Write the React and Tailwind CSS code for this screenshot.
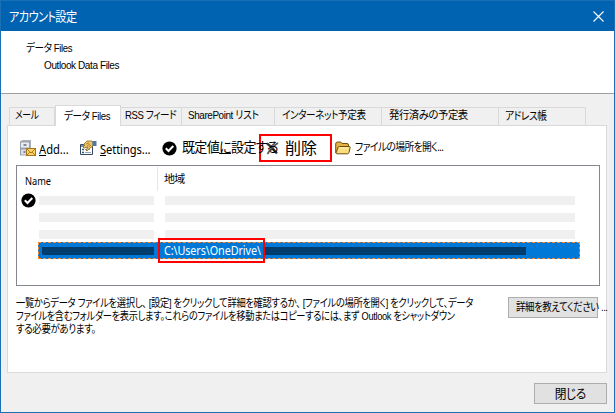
import React, { useState } from 'react';

const tabs = [
  { id: 'mail', label: 'メール', box: 'w-[46px] pl-[5px]', text: 'scale-x-[0.8]' },
  { id: 'data', label: 'データ Files', box: 'w-[66px] pl-2', text: 'scale-x-[0.87]' },
  { id: 'rss', label: 'RSS フィード', box: 'w-[61px] pl-1', text: 'scale-x-[0.87]' },
  { id: 'sharepoint', label: 'SharePoint リスト', box: 'w-[93px] pl-1.5', text: 'scale-x-[0.9]' },
  { id: 'calendar', label: 'インターネット予定表', box: 'w-[107px] pl-[7px]', text: 'scale-x-[0.87]' },
  { id: 'published', label: '発行済みの予定表', box: 'w-[117px] pl-[7px]', text: 'scale-x-[0.94]' },
  { id: 'address', label: 'アドレス帳', box: 'w-[87px] pl-1.5', text: 'scale-x-[0.88] pt-0.5' }
];

const AddIcon = () => (
  <svg className="shrink-0" width="16" height="17" viewBox="0 0 16 17">
    <path d="M0 2l2-2h9v14l-1 1H0z" fill="#a9b0ba" />
    <rect x="0.500" y="2" width="9" height="6" fill="#e9ecf0" stroke="#8d96a3" strokeWidth="0.8" />
    <rect x="0.500" y="9" width="9" height="6" fill="#d9dee5" stroke="#8d96a3" strokeWidth="0.8" />
    <path d="M3.500 5h3M3.500 12h2" stroke="#5c6c82" strokeWidth="1.5" />
    <rect x="6.500" y="8.500" width="9" height="7" fill="#fbd667" stroke="#a8771d" />
    <path d="M7 9l4 4 4-4M7 15l3-3M15 15l-3-3" fill="none" stroke="#b77b19" />
  </svg>
);

const SettingsIcon = () => (
  <svg className="shrink-0" width="17" height="16" viewBox="0 0 17 16">
    <path d="M0.500 4.500h12v10h-12z" fill="#fff" stroke="#33465f" />
    <path d="M1 6h6" stroke="#7593b5" strokeWidth="2" />
    <path d="M2 9.500h2M2 12.500h2" stroke="#31557e" strokeWidth="1.6" />
    <path d="M5 9.500h5M5 12.500h6" stroke="#8ea3bd" />
    <path d="M3 5l4-4h5l1 1v4l-3 2-3 3-1-1 2-3-4 1-1-1 2-2z" fill="#edc669" stroke="#8b6519" strokeWidth="0.8" />
    <path d="M6 4l3-1M7 6l3-2M9 7l2-2" stroke="#a47622" strokeWidth="0.8" />
    <path d="M12.500 1h4v5h-4z" fill="#4f78a8" />
  </svg>
);

const CheckIcon = () => (
  <svg className="shrink-0" width="15" height="15" viewBox="0 0 15 15">
    <circle cx="7.500" cy="7.500" r="7.100" fill="#000" />
    <path d="M3.800 7.300l2.700 2.700 4.800-5" fill="none" stroke="#fff" strokeWidth="2" />
  </svg>
);

const DeleteIcon = () => (
  <svg className="shrink-0" width="13" height="13" viewBox="0 0 13 13">
    <path d="M1 1.500c3 2 6 5 10 10" fill="none" stroke="#333" strokeWidth="2.200" />
    <path d="M12 1C8 3.500 4 7 1.500 12" fill="none" stroke="#555" strokeWidth="1.700" />
  </svg>
);

const FolderIcon = () => (
  <svg className="shrink-0" width="16" height="14" viewBox="0 0 16 14">
    <path d="M0.700 12V3Q.7 1 2.500 1H5q1.500 0 2 1.500h5q1.500 0 1.500 1.500v2.500" fill="#e3b443" stroke="#75500c" />
    <path d="M2 12.800Q1 12.800 1.300 11.500L3 6.500q.3-1 1.500-1h9.700q1.200 0 .9 1L14 11.500q-.3 1.300-1.500 1.300z" fill="#fbdd7d" stroke="#6f4a08" />
    <path d="M4.500 7h9" stroke="#fff4bd" />
  </svg>
);

const App = () => {
  const [activeTab, setActiveTab] = useState('data');

  return (
    <div className="w-[615px] h-[413px] flex flex-col overflow-hidden border border-[#1a6fb5] bg-[#f0f0f0] font-['Liberation_Sans','Noto_Sans_CJK_JP',sans-serif] text-[11px] leading-[13px] text-black whitespace-nowrap [font-feature-settings:'palt']">
      <header className="h-[30px] shrink-0 flex items-center justify-between bg-[#0063b1] pl-2 pr-[10px] text-white">
        <h1 className="text-[13px] tracking-[-0.7px] origin-left scale-x-[0.86]">アカウント設定</h1>
        <button aria-label="閉じる">
          <svg width="11" height="11" viewBox="0 0 11 11">
            <path d="M.5.5l10 10M10.500.5l-10 10" stroke="#fff" strokeWidth="1.1" />
          </svg>
        </button>
      </header>

      <section className="h-[63px] shrink-0 bg-white border-b border-[#a0a0a0] pt-[11px] pl-[25px]">
        <p className="w-fit tracking-[-0.45px] origin-left scale-x-[0.87]">データ Files</p>
        <p className="pl-[18px] pt-1 text-[10px] tracking-[-0.4px]">Outlook Data Files</p>
      </section>

      <nav className="h-[31px] shrink-0 flex items-end pl-2">
        {tabs.map((tab) => (
          <button
            key={tab.id}
            onClick={() => setActiveTab(tab.id)}
            className={`shrink-0 text-left border-t border-r border-[#d9d9d9] ${tab.box} ${
              activeTab === tab.id
                ? 'h-[21px] bg-white border-l relative top-px'
                : 'h-[18px] first:border-l pb-0.5'
            }`}
          >
            <span className={`inline-block origin-left tracking-[-0.45px] ${tab.text}`}>{tab.label}</span>
          </button>
        ))}
      </nav>

      <main className="w-[600px] h-[248px] shrink-0 ml-1.5 bg-white border border-[#d9d9d9] pl-2">
        <div className="h-[39px] flex items-center pt-[5px] pl-1 font-['Noto_Sans','Noto_Sans_CJK_JP',sans-serif] text-[12px]">
          <button className="w-[60px] shrink-0 flex items-center gap-[3px]">
            <AddIcon />
            <span className="origin-left scale-x-[0.93] pt-0.5"><u>A</u>dd...</span>
          </button>
          <button className="w-[82px] shrink-0 flex items-center gap-[3px]">
            <SettingsIcon />
            <span className="tracking-[-0.1px] origin-left scale-x-[0.93] pt-0.5"><u>S</u>ettings...</span>
          </button>
          <button className="w-[97px] shrink-0 flex items-center gap-[5px]">
            <CheckIcon />
            <span className="text-[14px] tracking-[-0.7px] pb-1 origin-left scale-x-[0.93]">既定値<u>に</u>設定する</span>
          </button>
          <button className="w-[73px] h-[28px] shrink-0 flex items-center gap-1.5 border-2 border-[#f00] pl-[5px] text-[16px]">
            <DeleteIcon />
            <span>削除</span>
          </button>
          <button className="shrink-0 flex items-center gap-1 pl-[3px] text-[11px]">
            <FolderIcon />
            <span className="tracking-[-0.7px] pb-1 origin-left scale-x-[0.89]"><u className="underline-offset-3">フ</u>ァイルの場所を開く...</span>
          </button>
        </div>

        <div className="w-[584px] h-[121px] border border-[#828790]">
          <div className="h-[30px] flex pt-px">
            <div className="w-[141px] h-[24px] border-r border-[#e5e5e5] pl-2 pt-[8px] font-['Noto_Sans',sans-serif] text-[10.500px]">
              <span className="inline-block origin-left scale-x-[0.88]">Name</span>
            </div>
            <div className="pl-1.5 pt-[6px] tracking-[-0.8px]">地域</div>
          </div>
          <div className="h-[9px] flex items-center">
            <div className="w-[22px] pl-1 shrink-0"><CheckIcon /></div>
            <div className="w-[115px] h-[9px] mr-[11px] bg-[#f0f0f0]" />
            <div className="w-[410px] h-[9px] bg-[#f0f0f0]" />
          </div>
          {[0, 1].map((row) => (
            <div key={row} className="h-[9px] mt-2 flex pl-[22px]">
              <div className="w-[115px] mr-[11px] bg-[#f0f0f0]" />
              <div className="w-[410px] bg-[#f0f0f0]" />
            </div>
          ))}
          {/* selected row with the focus rectangle */}
          <div className="w-[542px] h-[17px] mt-[3px] ml-[21px] flex items-center border border-dashed border-[#ff8728] bg-[#0078d7] pl-[3px]">
            <div className="w-[112px] h-[8px] shrink-0 bg-[#003d6d]" />
            <div className="w-[107px] h-[25px] ml-1 shrink-0 flex items-center border-2 border-[#f00] pl-1 font-['Noto_Sans',sans-serif] text-[12px] text-white">
              <span className="origin-left tracking-[-0.1px] scale-x-[0.9]">C:\Users\OneDrive\</span>
            </div>
            <div className="w-[261px] h-[8px] shrink-0 bg-[#003d6d]" />
          </div>
        </div>

        <div className="flex pt-[11px]">
          <div className="w-[492px] shrink-0 tracking-[-0.4px]">
            <p className="w-fit origin-left scale-x-[0.846]">一覧からデータ ファイルを選択し、 [設定] をクリックして詳細を確認するか、 [ファイルの場所を開く] をクリックして、データ</p>
            <p className="w-fit origin-left scale-x-[0.84]">ファイルを含むフォルダーを表示します。これらのファイルを移動またはコピーするには、まず Outlook をシャットダウン</p>
            <p className="w-fit origin-left scale-x-[0.86]">する必要があります。</p>
          </div>
          <button className="w-[90px] h-[21px] flex items-center border border-[#adadad] bg-[#e1e1e1] pl-[7px]">
            <span className="tracking-[-0.5px] origin-left scale-x-[0.86]">詳細を教えてください ...</span>
          </button>
        </div>
      </main>

      <footer className="flex justify-end pt-[10px] pr-[7px]">
        <button className="w-[73px] h-[21px] border border-[#adadad] bg-[#e1e1e1] text-[13px] tracking-[-0.5px]">
          <span className="inline-block scale-x-[0.9]">閉じる</span>
        </button>
      </footer>
    </div>
  );
};

export default App;
